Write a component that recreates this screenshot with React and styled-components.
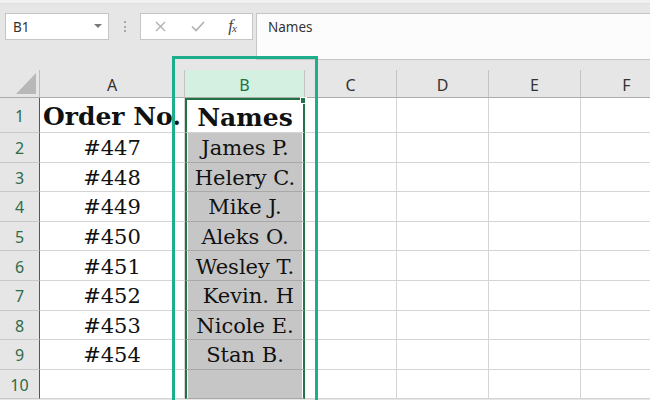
import React from "react";
import styled, { createGlobalStyle } from "styled-components";

const GREEN = "#217346";
const TEAL = "#1dae8c";
const UI_FONT = `"Noto Sans", "Open Sans", Arial, sans-serif`;
const CELL_FONT = `"DejaVu Serif", "Liberation Serif", Georgia, serif`;

const Global = createGlobalStyle`
  html, body { margin: 0; padding: 0; }
  body {
    width: 650px;
    height: 400px;
    overflow: hidden;
    background: #e6e6e6;
    font-family: ${UI_FONT};
  }
`;

const Screen = styled.div`
  position: relative;
  width: 650px;
  height: 400px;
  overflow: hidden;
  background: #e6e6e6;
  display: flex;
  flex-direction: column;
`;

const TopShade = styled.div`
  height: 4px;
  background: #f1f1f1;
  border-bottom: 1px solid #e0e0e0;
  box-sizing: border-box;
`;

const FormulaArea = styled.div`
  height: 56px;
  display: flex;
  align-items: flex-start;
  padding-top: 9px;
  box-sizing: border-box;
`;

const NameBox = styled.div`
  margin-left: 5px;
  width: 104px;
  height: 27px;
  box-sizing: border-box;
  border: 1px solid #c6c6c6;
  background: #fff;
  display: flex;
  align-items: center;
  justify-content: space-between;
  padding: 0 6px 0 7px;
  font-size: 13.5px;
  color: #333;
`;

const Caret = styled.span`
  width: 0;
  height: 0;
  border-left: 4px solid transparent;
  border-right: 4px solid transparent;
  border-top: 4px solid #7a7a7a;
  margin-top: -2px;
`;

const Grip = styled.div`
  width: 31px;
  height: 27px;
  display: flex;
  flex-direction: column;
  align-items: center;
  justify-content: center;
  gap: 2.5px;
`;

const Dot = styled.span`
  width: 2px;
  height: 2px;
  background: #a8a8a8;
`;

const ButtonBox = styled.div`
  width: 113px;
  height: 27px;
  box-sizing: border-box;
  border: 1px solid #c6c6c6;
  background: #fff;
  display: flex;
  align-items: center;
  padding: 0 6px 0 14px;
`;

const IconSlot = styled.span`
  width: ${(p) => p.$w}px;
  display: flex;
  align-items: center;
`;

const Fx = styled.span`
  font-family: "Liberation Serif", "DejaVu Serif", serif;
  font-style: italic;
  font-size: 17px;
  color: #444;
  letter-spacing: -1px;
  margin-top: -2px;
  sub {
    font-size: 11px;
    vertical-align: -1px;
  }
`;

const FormulaBar = styled.div`
  margin-left: 3px;
  flex: 1;
  height: 47px;
  box-sizing: border-box;
  border: 1px solid #c6c6c6;
  border-right: none;
  background: #fcfcfc;
  padding: 5px 0 0 11px;
  font-size: 13.5px;
  line-height: 17px;
  color: #333;
`;

const Sheet = styled.div`
  padding-top: 10px;
  display: grid;
  grid-template-columns: 40px 145px 120px 92px 92px 92px 92px;
  grid-template-rows: 28px 35px repeat(9, 29.6px);
  width: 673px;
`;

const Corner = styled.div`
  box-sizing: border-box;
  border-right: 1px solid #bdbdbd;
  border-bottom: 1px solid #ababab;
  display: flex;
  align-items: flex-end;
  justify-content: flex-end;
  padding: 0 3px 3px 0;
`;

const ColHead = styled.div`
  box-sizing: border-box;
  border-right: 1px solid #c3c3c3;
  border-bottom: 1px solid #ababab;
  background: ${(p) => (p.$active ? "#d3f0e0" : "#e6e6e6")};
  color: ${(p) => (p.$active ? GREEN : "#333")};
  font-size: 16px;
  display: flex;
  align-items: center;
  justify-content: center;
  padding-top: 2px;
`;

const RowHead = styled.div`
  box-sizing: border-box;
  border-right: 1px solid ${GREEN};
  border-bottom: 1px solid #c9c9c9;
  background: #e6e6e6;
  color: #2e6b4b;
  font-size: 16px;
  display: flex;
  align-items: center;
  justify-content: center;
  padding-top: 2px;
`;

const Cell = styled.div`
  position: relative;
  box-sizing: border-box;
  border-right: 1px solid #d4d4d4;
  border-bottom: 1px solid #d4d4d4;
  background: #fff;
  font-family: ${CELL_FONT};
  font-size: ${(p) => (p.$bold ? 25 : 21)}px;
  font-weight: ${(p) => (p.$bold ? 700 : 400)};
  color: #111;
  white-space: pre;
  display: flex;
  align-items: center;
  justify-content: center;
  padding-top: ${(p) => (p.$bold ? 3 : 2)}px;
`;

const SelCell = styled(Cell)`
  border-left: 2px solid ${GREEN};
  border-right: 2px solid ${GREEN};
  border-top: ${(p) => (p.$active ? `2px solid ${GREEN}` : "none")};
  border-bottom: 1px solid ${(p) => (p.$active ? "#d4d4d4" : "#a9a9a9")};
  background: ${(p) => (p.$active ? "#fff" : "#c6c6c6")};
  box-shadow: inset 1px 0 0 #fff, inset -1px 0 0 #fff;
`;

const Handle = styled.span`
  position: absolute;
  top: -3px;
  right: -4px;
  width: 5px;
  height: 5px;
  background: ${GREEN};
  border: 1px solid #fff;
  box-sizing: content-box;
`;

const Callout = styled.div`
  position: absolute;
  left: 172px;
  top: 56px;
  width: 146px;
  height: 360px;
  box-sizing: border-box;
  border: 3px solid ${TEAL};
  pointer-events: none;
`;

const orders = ["#447", "#448", "#449", "#450", "#451", "#452", "#453", "#454", ""];
const names = ["James P.", "Helery C.", "Mike J.", "Aleks O.", "Wesley T.", " Kevin. H", "Nicole E.", "Stan B.", ""];
const extraCols = ["C", "D", "E", "F"];

export default function App() {
  return (
    <Screen>
      <Global />
      <TopShade />
      <FormulaArea>
        <NameBox>
          <span>B1</span>
          <Caret />
        </NameBox>
        <Grip>
          <Dot />
          <Dot />
          <Dot />
        </Grip>
        <ButtonBox>
          <IconSlot $w={36}>
            <svg width="11" height="11" viewBox="0 0 11 11">
              <path d="M1 1 L10 10 M10 1 L1 10" stroke="#b0b0b0" strokeWidth="1.4" fill="none" />
            </svg>
          </IconSlot>
          <IconSlot $w={38}>
            <svg width="14" height="11" viewBox="0 0 14 11">
              <path d="M1 5.5 L5 9.5 L13 1" stroke="#b0b0b0" strokeWidth="1.6" fill="none" />
            </svg>
          </IconSlot>
          <IconSlot $w={18}>
            <Fx>
              f<sub>x</sub>
            </Fx>
          </IconSlot>
        </ButtonBox>
        <FormulaBar>Names</FormulaBar>
      </FormulaArea>
      <Sheet>
        <Corner>
          <svg width="20" height="21" viewBox="0 0 20 21">
            <polygon points="20,0 20,21 0,21" fill="#b8b8b8" />
          </svg>
        </Corner>
        <ColHead>A</ColHead>
        <ColHead $active>B</ColHead>
        {extraCols.map((c) => (
          <ColHead key={c}>{c}</ColHead>
        ))}

        <RowHead>1</RowHead>
        <Cell $bold>Order No.</Cell>
        <SelCell $bold $active>
          Names
          <Handle />
        </SelCell>
        {extraCols.map((c) => (
          <Cell key={c} />
        ))}

        {orders.map((o, i) => (
          <React.Fragment key={i}>
            <RowHead>{i + 2}</RowHead>
            <Cell>{o}</Cell>
            <SelCell>{names[i]}</SelCell>
            {extraCols.map((c) => (
              <Cell key={c} />
            ))}
          </React.Fragment>
        ))}
      </Sheet>
      <Callout />
    </Screen>
  );
}
